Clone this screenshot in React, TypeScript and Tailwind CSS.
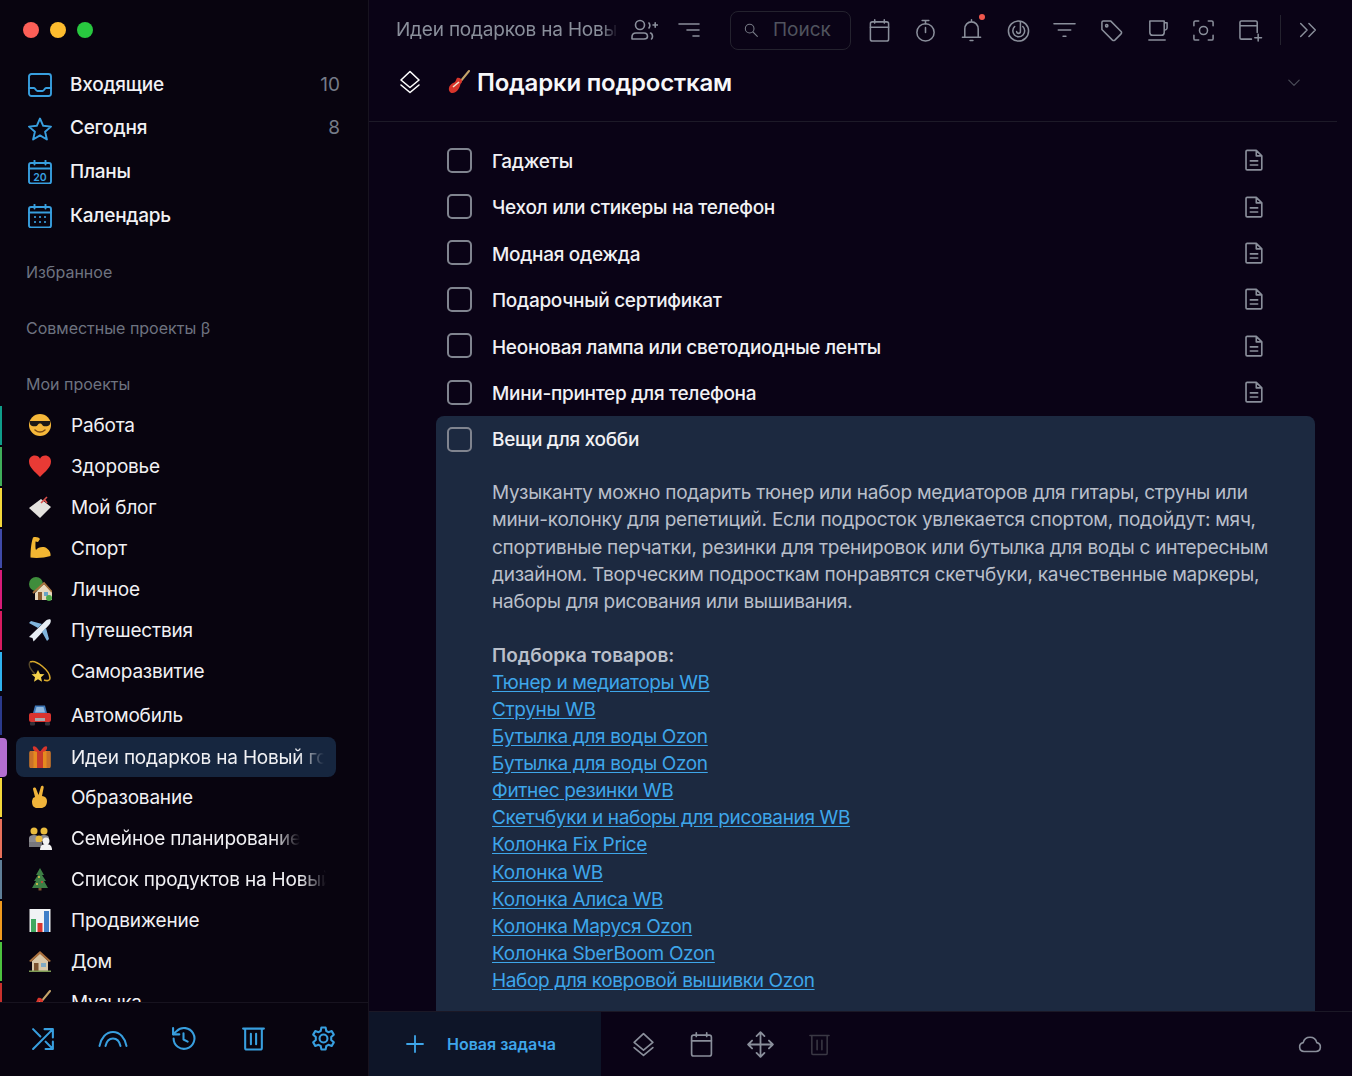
import React from "react";

type IconProps = { className?: string };

const Svg = ({ className, children, w = 24 }: IconProps & { children: React.ReactNode; w?: number }) => (
  <svg viewBox={`0 0 ${w} 24`} fill="none" stroke="currentColor" strokeWidth={1.6} strokeLinecap="round" strokeLinejoin="round" className={className}>
    {children}
  </svg>
);

// sidebar icons
const InboxIcon = (p: IconProps) => (
  <Svg {...p}>
    <rect x="1" y="1" width="22" height="22" rx="2.5" />
    <path d="M1 15h5c1.500 0 1.500 3 3.500 3h5c2 0 2-3 3.500-3h5" />
  </Svg>
);
const StarIcon = (p: IconProps) => (
  <Svg {...p}>
    <path d="M12 1.500l3.200 7.300 7.800.8-5.900 5.200 1.800 7.700-6.900-4.100-6.900 4.100 1.800-7.700L1 9.600l7.800-.8z" />
  </Svg>
);
const PlansIcon = (p: IconProps) => (
  <Svg {...p}>
    <rect x="1" y="3" width="22" height="20.500" rx="2" />
    <path d="M1 8.500h22M6.500 .5v4M17.500 .5v4" />
    <text x="12" y="20.500" textAnchor="middle" fontSize="10.500" fontWeight="600" fill="currentColor" stroke="none" fontFamily="Inter, sans-serif">20</text>
  </Svg>
);
const CalendarGridIcon = (p: IconProps) => (
  <Svg {...p}>
    <rect x="1" y="3" width="22" height="20.500" rx="2" />
    <path d="M1 8.500h22M6.500 .5v4M17.500 .5v4" />
    <path d="M7 13h.01M12 13h.01M17 13h.01M7 18h.01M12 18h.01M17 18h.01" strokeWidth={2.200} />
  </Svg>
);
const ShuffleIcon = (p: IconProps) => (
  <Svg {...p}>
    <path d="M2 22L21 3M21 3h-8M21 3v8M2 3l7 7M14 15l7 7M21 22h-7M21 22v-7" />
  </Svg>
);
const ArcIcon = (p: IconProps) => (
  <svg viewBox="0 0 30 18" fill="none" stroke="currentColor" strokeWidth={2} strokeLinecap="round" className={p.className}>
    <path d="M1.500 16C3 8 8 2 15 2s12 6 13.500 14" />
    <path d="M7.500 16C8.500 11.500 11 8.500 15 8.500s6.500 3 7.500 7.500" />
  </svg>
);
const HistoryIcon = (p: IconProps) => (
  <Svg {...p}>
    <path d="M2.500 12a10 10 0 1 0 3-7.200L2 8" />
    <path d="M2 2v6h6M12 7v6l4 2" />
  </Svg>
);
const TrashIcon = (p: IconProps) => (
  <Svg {...p}>
    <path d="M2 2.500h20M4 2.500V21a1.500 1.500 0 0 0 1.500 1.500h13A1.500 1.500 0 0 0 20 21V2.500M9.500 7.500v10M14.500 7.500v10" />
  </Svg>
);
const GearIcon = (p: IconProps) => (
  <Svg {...p}>
    <path d="M10 1.500h4l.7 3.300 2 1.100 3.200-1 2 3.400-2.500 2.300v2.800l2.500 2.300-2 3.400-3.200-1-2 1.100-.7 3.300h-4l-.7-3.300-2-1.100-3.200 1-2-3.400 2.500-2.300v-2.800L2.100 8.300l2-3.400 3.200 1 2-1.100z" />
    <circle cx="12" cy="12" r="3.800" />
  </Svg>
);

// toolbar icons
const PeopleAddIcon = (p: IconProps) => (
  <Svg {...p} w={28}>
    <circle cx="10" cy="7" r="4.500" />
    <path d="M2 21v-2c0-3 2-4 4-4h8c2.500 0 3.500 1.500 3.500 3.500S16 21 14 21H3zM19 5a4.500 4.500 0 0 1 0 5M20.500 15c1.500.5 2 2 2 3.500 0 1-.5 2-1 2.500M23 7h4.500M25.200 4.700v4.600" />
  </Svg>
);
const SortIcon = (p: IconProps) => (
  <Svg {...p}>
    <path d="M2 6h20M10 12h12M16 18h6" />
  </Svg>
);
const SearchIcon = (p: IconProps) => (
  <Svg {...p}>
    <circle cx="10" cy="10" r="6.500" />
    <path d="M15 15l6.500 6.500" />
  </Svg>
);
const CalIcon = (p: IconProps) => (
  <Svg {...p}>
    <rect x="2.500" y="3" width="19" height="20" rx="2" />
    <path d="M2.500 8.500h19M7 .8v3.500M17 .8v3.500" />
  </Svg>
);
const TimerIcon = (p: IconProps) => (
  <Svg {...p}>
    <circle cx="12" cy="14" r="9" />
    <path d="M8.500 1.500h7M12 14V9M12 2v3" />
  </Svg>
);
const BellIcon = (p: IconProps) => (
  <Svg {...p}>
    <path d="M5 19V10.500C5 6 8 3 12 3s7 3 7 7.500V19M2.500 19h19M12 .8v2.200M10.500 22.500h3" />
  </Svg>
);
const FocusIcon = (p: IconProps) => (
  <Svg {...p}>
    <circle cx="12" cy="12.500" r="10.500" />
    <path d="M8 7.800a6.200 6.200 0 1 0 8.500 0M14 3v10a2 2 0 0 1-4 0" />
  </Svg>
);
const FilterIcon = (p: IconProps) => (
  <Svg {...p}>
    <path d="M1 5h22M5.500 11.500h13M10.500 18h3" />
  </Svg>
);
const TagIcon = (p: IconProps) => (
  <Svg {...p}>
    <path d="M2 3.500A1.500 1.500 0 0 1 3.500 2H11l11 11a2 2 0 0 1 0 2.500L15.500 22a2 2 0 0 1-2.500 0L2 11z" />
    <circle cx="7" cy="7" r="1.200" />
  </Svg>
);
const CupIcon = (p: IconProps) => (
  <Svg {...p}>
    <path d="M4 2h15v12a3 3 0 0 1-3 3H7a3 3 0 0 1-3-3zM19 4h3v5a2.500 2.500 0 0 1-3 2.500M3 22h17" />
  </Svg>
);
const ScanIcon = (p: IconProps) => (
  <Svg {...p}>
    <path d="M2 7V3.500A1.500 1.500 0 0 1 3.500 2H7M17 2h3.500A1.500 1.500 0 0 1 22 3.500V7M22 17v3.500a1.500 1.500 0 0 1-1.500 1.500H17M7 22H3.500A1.500 1.500 0 0 1 2 20.500V17" />
    <circle cx="12" cy="12" r="4.200" />
  </Svg>
);
const AddWindowIcon = (p: IconProps) => (
  <Svg {...p} w={26}>
    <path d="M14 21H3.500A1.500 1.500 0 0 1 2 19.500v-16A1.500 1.500 0 0 1 3.500 2h15A1.500 1.500 0 0 1 20 3.500V14M2 7h18M21 16v7M17.500 19.500h7" />
  </Svg>
);
const ChevronsIcon = (p: IconProps) => (
  <Svg {...p}>
    <path d="M4 5l7 7-7 7M13 5l7 7-7 7" />
  </Svg>
);
const LayersIcon = (p: IconProps) => (
  <Svg {...p}>
    <path d="M12 1.500L21 10l-9 7.500L3 10zM3 15l9 7.500L21 15" />
  </Svg>
);
const DocIcon = (p: IconProps) => (
  <Svg {...p}>
    <path d="M4.500 1.500h10l6 6v14a1.200 1.200 0 0 1-1.200 1.200H4.500a1.200 1.200 0 0 1-1.200-1.200V2.700a1.200 1.200 0 0 1 1.200-1.200zM14.500 1.500v6h6M8 13h8M8 17.500h8" />
  </Svg>
);
const MoveIcon = (p: IconProps) => (
  <Svg {...p}>
    <path d="M12 1v22M1 12h22M8.500 4.500L12 1l3.500 3.500M8.500 19.500L12 23l3.500-3.500M4.500 8.500L1 12l3.500 3.500M19.500 8.500L23 12l-3.500 3.500" />
  </Svg>
);
const CloudIcon = (p: IconProps) => (
  <Svg {...p}>
    <path d="M6 19.500a4.500 4.500 0 0 1-.8-8.900 7 7 0 0 1 13.600 0 4.500 4.500 0 0 1-.8 8.900z" />
  </Svg>
);

// emoji pictures, there is no colour emoji font in the sandbox
const E = ({ children }: { children: React.ReactNode }) => (
  <svg viewBox="0 0 24 24" className="h-6 w-6 shrink-0">{children}</svg>
);
const emoji: Record<string, React.ReactNode> = {
  cool: (
    <E>
      <circle cx="12" cy="12" r="11" fill="#f5b83a" />
      <path d="M1.500 8h21l-.5 3c-.5 2.500-7 3.500-8 .5-.5-1.500-3.500-1.500-4 0-1 3-7.500 2-8-.5z" fill="#1d1a16" />
      <path d="M7 17c3 2.500 7 2.500 10 0" stroke="#7a4a12" strokeWidth="1.500" fill="none" strokeLinecap="round" />
    </E>
  ),
  heart: (
    <E>
      <path d="M12 23C6 17 1 13 1 7.500 1 4 3.500 1.500 6.800 1.500c2.300 0 4.200 1.200 5.200 3.200 1-2 2.900-3.200 5.200-3.200C20.500 1.500 23 4 23 7.500 23 13 18 17 12 23z" fill="#e93a35" />
    </E>
  ),
  tag: (
    <E>
      <path d="M1 13L13 4l10 8-11 11z" fill="#e4e2de" />
      <path d="M13 8l6-6M16 4l3 4" stroke="#d8504c" strokeWidth="1.600" />
    </E>
  ),
  muscle: (
    <E>
      <path d="M5 1.500c3-1 6 0 7 1.500l-2 3-2.500-.5c0 4-.3 6.500.5 8.500 2-3 8-4 11-1.500 3 2 4 5.500 3.500 7.500-6 2-15 2.500-20 1.500C2.500 16 3 7 5 1.500z" fill="#f2b632" />
    </E>
  ),
  home2: (
    <E>
      <circle cx="8" cy="7" r="7" fill="#3f8d3c" />
      <path d="M7 16l9-9 8 8v8H7z" fill="#e8d8bd" />
      <path d="M5 16l11-10 8 9" stroke="#a9743f" strokeWidth="1.800" fill="none" />
      <rect x="10" y="15" width="4" height="8" fill="#8a5a2f" />
      <rect x="16" y="15" width="4" height="4" fill="#6aa5c8" />
      <circle cx="21" cy="21" r="3" fill="#4ea94a" />
    </E>
  ),
  plane: (
    <E>
      <path d="M22.500 1.500c-1.500-.8-3.500 0-5 1.500L3 17l-2 2 3.500 1 1 3.500 2-2L21 7c1.500-1.500 2.300-4 1.500-5.500z" fill="#e6edf3" />
      <path d="M14 6L3 3 1 5l9 5zM18 10l3 11-2 2-5-9" fill="#7fb4dc" />
    </E>
  ),
  dizzy: (
    <E>
      <path d="M2 3c6-3 20 9 20 16 0 3-3 3-6 2" stroke="#d9a92c" strokeWidth="1.600" fill="none" />
      <path d="M2 3c-2 3 1 8 5 12" stroke="#55472a" strokeWidth="1.400" fill="none" />
      <path d="M10 11l2 4 4.500.3-3.500 3 1 4.500-4-2.500-4 2.500 1-4.500-3.500-3 4.500-.3z" fill="#f4d14a" />
    </E>
  ),
  car: (
    <E>
      <path d="M5 10l2-7.500h10l2 7.500z" fill="#3f78b8" />
      <path d="M7 9.500l1.500-5.500h7L17 9.500z" fill="#8fb7dd" />
      <rect x="1" y="10" width="22" height="9" rx="2" fill="#d9342f" />
      <rect x="2" y="19" width="5" height="3.500" rx="1" fill="#34323a" />
      <rect x="17" y="19" width="5" height="3.500" rx="1" fill="#34323a" />
      <rect x="7" y="15" width="10" height="3" fill="#a8a8ac" />
    </E>
  ),
  gift: (
    <E>
      <rect x="1.500" y="6" width="21" height="17" rx="2" fill="#e68a1f" />
      <rect x="9" y="6" width="6" height="17" fill="#c93a2b" />
      <rect x="1.500" y="6" width="4" height="17" rx="1" fill="#c9702a" />
      <rect x="18.500" y="6" width="4" height="17" rx="1" fill="#c9702a" />
      <path d="M12 7C8 0 4 0 5 3.500s4 3.500 7 3.500c3 0 6 0 7-3.500s-3-3.500-7 3.500z" fill="#d8352b" />
    </E>
  ),
  victory: (
    <E>
      <path d="M8 23c-3-1-4-3-4-7l1-3 2-1-2-8c0-2 2.500-2 3-.5l2.500 6.500L13 1.500c.5-1.500 3-1 2.700 1L14 11c3 .5 5 2 5 5 0 5-3 7-6 7z" fill="#f0b43a" />
    </E>
  ),
  family: (
    <E>
      <circle cx="6" cy="5" r="3.500" fill="#e9bb3e" />
      <circle cx="16" cy="5" r="3.500" fill="#e9bb3e" />
      <path d="M1 17v-5c0-2 2-3 5-3s4 1 5 3v5z" fill="#8b8b90" />
      <path d="M11 13c0-3 2-4 5-4s5 1 5 3v3H11z" fill="#8b8b90" />
      <circle cx="11" cy="13" r="3.500" fill="#e9bb3e" />
      <rect x="1" y="16" width="13" height="5" fill="#77777c" />
      <circle cx="18" cy="15" r="3.500" fill="#f3f3f3" />
      <path d="M12 24c0-4 2-6 6-6s6 2 6 6z" fill="#f3f3f3" />
    </E>
  ),
  tree: (
    <E>
      <path d="M12 1l4 7h-2l4 6h-2l4 7H4l4-7H6l4-6H8z" fill="#3d7f45" />
      <rect x="10.500" y="21" width="3" height="2.500" fill="#7a5230" />
      <circle cx="11" cy="10" r="1" fill="#e8c64a" />
      <circle cx="14" cy="15" r="1" fill="#d9453f" />
      <circle cx="9" cy="17" r="1" fill="#e8c64a" />
    </E>
  ),
  chart: (
    <E>
      <rect x="1.500" y="1" width="21" height="23" fill="#f1f3f5" />
      <rect x="3" y="11" width="5" height="13" fill="#3fa860" />
      <rect x="9.500" y="15" width="5" height="9" fill="#d9362f" />
      <rect x="16" y="3" width="5" height="21" fill="#3f7fc8" />
    </E>
  ),
  home: (
    <E>
      <path d="M4 12l8-8 8 8v10H4z" fill="#d8c7a9" />
      <path d="M1 12l11-10 11 10-2 1-9-8-9 8z" fill="#a86f3d" />
      <rect x="6" y="14" width="4.500" height="8" fill="#7a5230" />
      <rect x="13" y="14" width="5" height="4" fill="#7fa9c4" />
      <rect x="1" y="21.500" width="22" height="1.500" fill="#7d9a55" />
    </E>
  ),
  guitar: (
    <E>
      <path d="M22 1l-9 11" stroke="#c4a46a" strokeWidth="2" strokeLinecap="round" />
      <path d="M10 8c2-1 5 1 5 3s-1 2-1.500 3c-.5 2-1 3.500-2 5-2 3.500-6 5-8 3.500S1 17 4 14.500c1.500-1.500 3-1.500 4-2.500s1-3 2-4z" fill="#d8352b" />
      <path d="M6 17l6-5" stroke="#f0e6d0" strokeWidth="1.600" />
    </E>
  ),
};

const projects = [
  { name: "Работа", icon: "cool", bar: "bg-[#0f9d8a]", row: "", text: "" },
  { name: "Здоровье", icon: "heart", bar: "bg-[#3fae5a]", row: "", text: "" },
  { name: "Мой блог", icon: "tag", bar: "bg-[#f4d83a]", row: "", text: "" },
  { name: "Спорт", icon: "muscle", bar: "bg-[#3f4aa8]", row: "", text: "" },
  { name: "Личное", icon: "home2", bar: "bg-[#d81b78]", row: "", text: "" },
  { name: "Путешествия", icon: "plane", bar: "bg-[#d81b60]", row: "", text: "" },
  { name: "Саморазвитие", icon: "dizzy", bar: "bg-[#2fb2ee]", row: "", text: "" },
  { name: "Автомобиль", icon: "car", bar: "bg-[#2b3a8c]", row: "mt-[3px]", text: "" },
  { name: "Идеи подарков на Новый год", icon: "gift", bar: "bg-[#b46ed0]", row: "mt-[1px]", text: "w-[253px] overflow-hidden whitespace-nowrap [mask-image:linear-gradient(to_right,black_calc(100%-26px),transparent)]", active: true },
  { name: "Образование", icon: "victory", bar: "bg-[#f4d83a]", row: "-mt-[1px]", text: "" },
  { name: "Семейное планирование", icon: "family", bar: "bg-[#e8705a]", row: "", text: "w-[229px] overflow-hidden whitespace-nowrap [mask-image:linear-gradient(to_right,black_calc(100%-26px),transparent)]" },
  { name: "Список продуктов на Новый год", icon: "tree", bar: "bg-[#5f7f98]", row: "", text: "w-[255px] overflow-hidden whitespace-nowrap [mask-image:linear-gradient(to_right,black_calc(100%-26px),transparent)]" },
  { name: "Продвижение", icon: "chart", bar: "bg-[#f09a1e]", row: "", text: "" },
  { name: "Дом", icon: "home", bar: "bg-[#4cc23f]", row: "", text: "" },
  { name: "Музыка", icon: "guitar", bar: "bg-[#c9302c]", row: "", text: "" },
];

const tasks = [
  "Гаджеты",
  "Чехол или стикеры на телефон",
  "Модная одежда",
  "Подарочный сертификат",
  "Неоновая лампа или светодиодные ленты",
  "Мини-принтер для телефона",
];

const links = [
  "Тюнер и медиаторы WB",
  "Струны WB",
  "Бутылка для воды Ozon",
  "Бутылка для воды Ozon",
  "Фитнес резинки WB",
  "Скетчбуки и наборы для рисования WB",
  "Колонка Fix Price",
  "Колонка WB",
  "Колонка Алиса WB",
  "Колонка Маруся Ozon",
  "Колонка SberBoom Ozon",
  "Набор для ковровой вышивки Ozon",
];

function Sidebar() {
  const nav = [
    { label: "Входящие", Icon: InboxIcon, count: "10" },
    { label: "Сегодня", Icon: StarIcon, count: "8" },
    { label: "Планы", Icon: PlansIcon, count: "" },
    { label: "Календарь", Icon: CalendarGridIcon, count: "" },
  ];
  const tools = [ShuffleIcon, ArcIcon, HistoryIcon, TrashIcon, GearIcon];
  return (
    <aside className="flex h-full w-[369px] shrink-0 flex-col border-r border-[#17131f] bg-[#08040f]">
      <div className="min-h-0 flex-1 overflow-hidden">
        <div className="flex h-[63px] items-center gap-[11px] pb-[3px] pl-[23px]">
          <span className="h-4 w-4 rounded-full bg-[#fc5f57]" />
          <span className="h-4 w-4 rounded-full bg-[#fdbc2e]" />
          <span className="h-4 w-4 rounded-full bg-[#28c83f]" />
        </div>
        {nav.map(({ label, Icon, count }) => (
          <div key={label} className="flex h-[43.7px] items-center pl-[28px] pr-[28px]">
            <Icon className="h-6 w-6 stroke-[1.9px] text-[#389fdf]" />
            <span className="ml-[18px] flex-1 text-[19px] font-medium tracking-[-0.25px] text-[#f1f1f4]">{label}</span>
            <span className="text-[19px] text-[#757b87]">{count}</span>
          </div>
        ))}
        <div className="mt-[6px] flex h-[56px] items-center pl-[26px] text-[16px] text-[#6e7380]">Избранное</div>
        <div className="flex h-[56px] items-center pl-[26px] text-[16px] text-[#6e7380]">Совместные проекты β</div>
        <div className="h-[49px] pl-[26px] pt-[16px] text-[16px] leading-6 text-[#6e7380]">Мои проекты</div>
        {projects.map((p) => (
          <div key={p.name} className={`flex h-[41px] items-center ${p.row}`}>
            <span className={`h-[39px] shrink-0 ${p.bar} ${p.active ? "w-[7px] rounded-r" : "w-[2px]"}`} />
            <div className={`flex h-[40px] w-[320px] items-center rounded-lg pl-[12px] ${p.active ? "ml-[9px] bg-[#16263f]" : "ml-[14px]"}`}>
              {emoji[p.icon]}
              <span className={`ml-[19px] pt-[2px] text-[19px] tracking-[-0.2px] text-[#f1f1f4] ${p.text}`}>{p.name}</span>
            </div>
          </div>
        ))}
      </div>
      <div className="flex h-[74px] shrink-0 items-center border-t border-[#17131f] pb-[2px] pl-[8px] text-[#389fdf]">
        {tools.map((Icon, i) => (
          <div key={i} className="flex w-[70.2px] justify-center">
            <Icon className={Icon === ArcIcon ? "h-[18px] w-[30px]" : "h-[25px] w-[25px] stroke-2"} />
          </div>
        ))}
      </div>
    </aside>
  );
}

function Toolbar() {
  const icons = [CalIcon, TimerIcon, BellIcon, FocusIcon, FilterIcon, TagIcon, CupIcon, ScanIcon];
  return (
    <div className="flex h-[60px] shrink-0 items-center pl-[27px] text-[#8a8f9b]">
      <span className="w-[222px] overflow-hidden whitespace-nowrap text-[19px] tracking-[-0.2px] [mask-image:linear-gradient(to_right,black_calc(100%-16px),transparent)]">
        Идеи подарков на Новый год
      </span>
      <PeopleAddIcon className="ml-[12px] h-6 w-[28px]" />
      <SortIcon className="ml-[19px] h-6 w-6" />
      <div className="ml-[29px] flex h-[39px] w-[121px] items-center rounded-lg border border-[#24222e] pl-[12px]">
        <SearchIcon className="h-4 w-4 text-[#777b86]" />
        <span className="ml-[14px] text-[19px] text-[#50535e]">Поиск</span>
      </div>
      <div className="ml-[5px] flex">
        {icons.map((Icon, i) => (
          <div key={i} className="relative flex h-[46px] w-[46.4px] items-center justify-center">
            <Icon className="h-[23px] w-[23px]" />
            {Icon === BellIcon && <span className="absolute right-[10px] top-[7px] h-[6px] w-[6px] rounded-full bg-[#f0574d]" />}
          </div>
        ))}
        <div className="flex h-[46px] w-[46.4px] items-center justify-center">
          <AddWindowIcon className="h-[23px] w-[25px]" />
        </div>
      </div>
      <span className="ml-[6px] h-[30px] w-px bg-[#24222e]" />
      <ChevronsIcon className="ml-[16px] h-[22px] w-[22px]" />
    </div>
  );
}

function TaskList() {
  return (
    <div className="min-h-0 flex-1 overflow-hidden pl-[67px] pr-[37px]">
      <div className="h-[15px]" />
      {tasks.map((t) => (
        <div key={t} className="flex h-[46.4px] items-center pl-[11px] pr-[50px]">
          <span className="h-[25px] w-[25px] rounded-[5px] border-2 border-[#80848f]" />
          <span className="ml-[20px] flex-1 pt-[4px] text-[19px] font-medium tracking-[-0.3px] text-[#f1f1f4]">{t}</span>
          <DocIcon className="h-[22px] w-[22px] stroke-[1.8px] text-[#8a8f9b]" />
        </div>
      ))}
      <div className="mt-[1px] h-[600px] rounded-t-lg bg-[#1c2940] pl-[11px] pr-[40px]">
        <div className="flex h-[46px] items-center">
          <span className="h-[25px] w-[25px] rounded-[5px] border-2 border-[#80848f]" />
          <span className="ml-[20px] pt-[1px] text-[19px] font-medium tracking-[-0.3px] text-[#f1f1f4]">Вещи для хобби</span>
        </div>
        <div className="pl-[45px] pt-[17px] text-[19px] leading-[27.1px] tracking-[-0.25px] text-[#b9bfca]">
          <p>
            Музыканту можно подарить тюнер или набор медиаторов для гитары, струны или
            <br />
            мини-колонку для репетиций. Если подросток увлекается спортом, подойдут: мяч,
            <br />
            спортивные перчатки, резинки для тренировок или бутылка для воды с интересным
            <br />
            дизайном. Творческим подросткам понравятся скетчбуки, качественные маркеры,
            <br />
            наборы для рисования или вышивания.
          </p>
          <p className="mt-[27px] font-semibold tracking-normal">Подборка товаров:</p>
          {links.map((l, i) => (
            <div key={i}>
              <span className="tracking-[-0.35px] text-[#3ea6ea] underline underline-offset-2">{l}</span>
            </div>
          ))}
        </div>
      </div>
    </div>
  );
}

function BottomBar() {
  return (
    <div className="flex h-[65px] shrink-0 items-center border-t border-[#1b1826] text-[#8a8f9b]">
      <div className="flex h-full w-[232px] items-center bg-[#0e1528] pl-[36px] text-[#3ea6ea]">
        <svg viewBox="0 0 20 20" fill="none" stroke="currentColor" strokeWidth={1.8} strokeLinecap="round" className="h-5 w-5">
          <path d="M10 2v16M2 10h16" />
        </svg>
        <span className="ml-[22px] text-[16px] font-semibold">Новая задача</span>
      </div>
      <LayersIcon className="ml-[30px] h-[25px] w-[25px]" />
      <CalIcon className="ml-[33px] h-[25px] w-[25px]" />
      <MoveIcon className="ml-[33px] h-[27px] w-[27px]" />
      <TrashIcon className="ml-[34px] h-[23px] w-[23px] text-[#3a3844]" />
      <CloudIcon className="ml-auto mr-[30px] h-6 w-6" />
    </div>
  );
}

export default function App() {
  return (
    <div className="flex h-[1076px] w-[1352px] overflow-hidden bg-[#0a0316] font-['Inter',sans-serif]">
      <Sidebar />
      <main className="flex min-w-0 flex-1 flex-col">
        <Toolbar />
        <div className="mr-[15px] flex h-[62px] shrink-0 items-center border-b border-[#1d1a28] pb-[16px] pl-[29px] text-white">
          <LayersIcon className="mb-[2px] h-6 w-6" />
          <span className="ml-[25px] h-[25px] w-[25px]">{emoji.guitar}</span>
          <span className="ml-[5px] text-[24px] font-semibold tracking-[-0.2px] text-[#f7f7f9]">Подарки подросткам</span>
          <svg viewBox="0 0 16 10" fill="none" stroke="currentColor" strokeWidth={1.5} strokeLinecap="round" strokeLinejoin="round" className="ml-auto mr-[36px] h-[8px] w-[14px] text-[#4a4c58]">
            <path d="M1.500 1.500L8 8l6.500-6.500" />
          </svg>
        </div>
        <TaskList />
        <BottomBar />
      </main>
    </div>
  );
}
